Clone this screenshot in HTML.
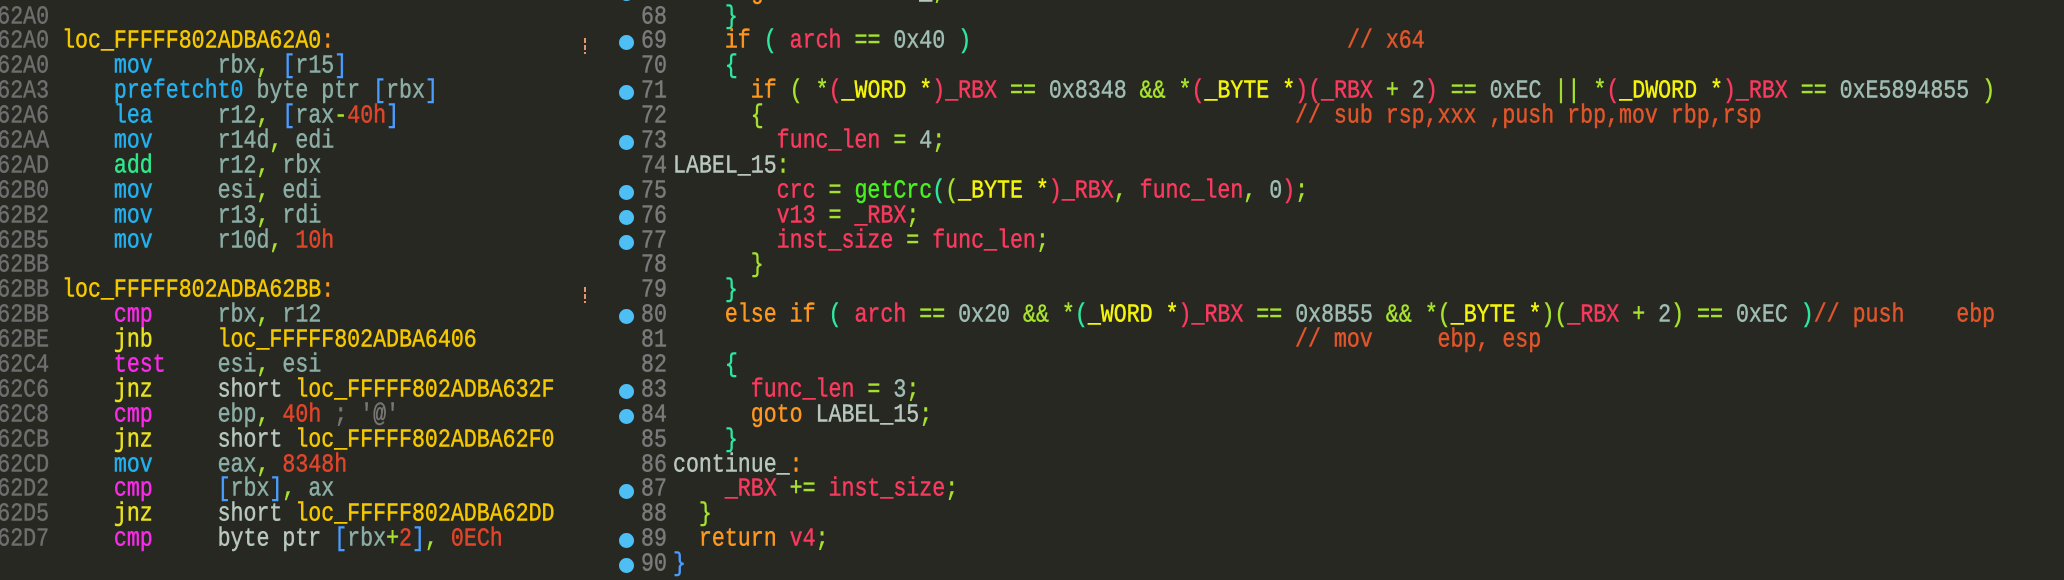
<!DOCTYPE html>
<html><head><meta charset="utf-8"><style>
html,body{margin:0;padding:0;background:#272822;width:2064px;height:576px;overflow:hidden}
.p{position:absolute;top:-19.35px;font-family:"Liberation Mono",monospace;font-size:21.6px;-webkit-text-stroke:0.4px currentColor}
.r{height:24.9px;line-height:24.9px;white-space:pre}
.r>span.t{display:inline-block;transform:scaleY(1.2);transform-origin:50% 55%}
.ad{color:#6e6e6e}
.lb{color:#f5c800}
.mv{color:#22b0f0}
.ad2{color:#2ee88a}
.cm{color:#f92ae8}
.jn{color:#e8e020}
.rg{color:#8aaea6}
.cmma{color:#a6e22e}
.br{color:#4a9cff}
.nm{color:#e0452a}
.gr{color:#777}
.kw{color:#fd971f}
.v{color:#f93a5e}
.n{color:#9fbdb4}
.op{color:#a6e22e}
.ty{color:#f4f40c}
.pa{color:#2ee8a0}
.co{color:#e0552a}
.fn{color:#48f020}
.lab{color:#b8c8bf}
.num{position:absolute;left:641px;top:-19.35px;font-family:"Liberation Mono",monospace;font-size:21.6px;color:#7a7a7a;-webkit-text-stroke:0.4px currentColor}
.dot{position:absolute;left:618.5px;width:15px;height:15px;border-radius:50%;background:#4dbff5}
.mk{position:absolute;left:584px;width:2px;height:16px;background:repeating-linear-gradient(#e8946a 0 5px,transparent 5px 7px)}
</style></head><body>
<div class="p" style="left:-2.75px">
<div class="r"><span class="t"><span class="ad">62A0</span></span></div>
<div class="r"><span class="t"><span class="ad">62A0</span></span></div>
<div class="r"><span class="t"><span class="ad">62A0</span> <span class="lb">loc_FFFFF802ADBA62A0</span><span class="kw">:</span></span></div>
<div class="r"><span class="t"><span class="ad">62A0</span>     <span class="mv">mov</span>     <span class="rg">rbx</span><span class="cmma">,</span> <span class="br">[</span><span class="rg">r15</span><span class="br">]</span></span></div>
<div class="r"><span class="t"><span class="ad">62A3</span>     <span class="mv">prefetcht0</span> <span class="rg">byte ptr</span> <span class="br">[</span><span class="rg">rbx</span><span class="br">]</span></span></div>
<div class="r"><span class="t"><span class="ad">62A6</span>     <span class="mv">lea</span>     <span class="rg">r12</span><span class="cmma">,</span> <span class="br">[</span><span class="rg">rax</span><span class="cmma">-</span><span class="nm">40h</span><span class="br">]</span></span></div>
<div class="r"><span class="t"><span class="ad">62AA</span>     <span class="mv">mov</span>     <span class="rg">r14d</span><span class="cmma">,</span> <span class="rg">edi</span></span></div>
<div class="r"><span class="t"><span class="ad">62AD</span>     <span class="ad2">add</span>     <span class="rg">r12</span><span class="cmma">,</span> <span class="rg">rbx</span></span></div>
<div class="r"><span class="t"><span class="ad">62B0</span>     <span class="mv">mov</span>     <span class="rg">esi</span><span class="cmma">,</span> <span class="rg">edi</span></span></div>
<div class="r"><span class="t"><span class="ad">62B2</span>     <span class="mv">mov</span>     <span class="rg">r13</span><span class="cmma">,</span> <span class="rg">rdi</span></span></div>
<div class="r"><span class="t"><span class="ad">62B5</span>     <span class="mv">mov</span>     <span class="rg">r10d</span><span class="cmma">,</span> <span class="nm">10h</span></span></div>
<div class="r"><span class="t"><span class="ad">62BB</span></span></div>
<div class="r"><span class="t"><span class="ad">62BB</span> <span class="lb">loc_FFFFF802ADBA62BB</span><span class="kw">:</span></span></div>
<div class="r"><span class="t"><span class="ad">62BB</span>     <span class="cm">cmp</span>     <span class="rg">rbx</span><span class="cmma">,</span> <span class="rg">r12</span></span></div>
<div class="r"><span class="t"><span class="ad">62BE</span>     <span class="jn">jnb</span>     <span class="lb">loc_FFFFF802ADBA6406</span></span></div>
<div class="r"><span class="t"><span class="ad">62C4</span>     <span class="cm">test</span>    <span class="rg">esi</span><span class="cmma">,</span> <span class="rg">esi</span></span></div>
<div class="r"><span class="t"><span class="ad">62C6</span>     <span class="jn">jnz</span>     <span class="lab">short</span> <span class="lb">loc_FFFFF802ADBA632F</span></span></div>
<div class="r"><span class="t"><span class="ad">62C8</span>     <span class="cm">cmp</span>     <span class="rg">ebp</span><span class="cmma">,</span> <span class="nm">40h</span> <span class="gr">; '@'</span></span></div>
<div class="r"><span class="t"><span class="ad">62CB</span>     <span class="jn">jnz</span>     <span class="lab">short</span> <span class="lb">loc_FFFFF802ADBA62F0</span></span></div>
<div class="r"><span class="t"><span class="ad">62CD</span>     <span class="mv">mov</span>     <span class="rg">eax</span><span class="cmma">,</span> <span class="nm">8348h</span></span></div>
<div class="r"><span class="t"><span class="ad">62D2</span>     <span class="cm">cmp</span>     <span class="br">[</span><span class="rg">rbx</span><span class="br">]</span><span class="cmma">,</span> <span class="rg">ax</span></span></div>
<div class="r"><span class="t"><span class="ad">62D5</span>     <span class="jn">jnz</span>     <span class="lab">short</span> <span class="lb">loc_FFFFF802ADBA62DD</span></span></div>
<div class="r"><span class="t"><span class="ad">62D7</span>     <span class="cm">cmp</span>     <span class="lab">byte ptr</span> <span class="br">[</span><span class="rg">rbx</span><span class="cmma">+</span><span class="nm">2</span><span class="br">]</span><span class="cmma">,</span> <span class="nm">0ECh</span></span></div>
<div class="r"></div>
</div>

<div class="mk" style="top:38px"></div>
<div class="mk" style="top:287px"></div>

<div class="dot" style="top:-14.5px"></div>
<div class="dot" style="top:35.3px"></div>
<div class="dot" style="top:85.1px"></div>
<div class="dot" style="top:134.9px"></div>
<div class="dot" style="top:184.7px"></div>
<div class="dot" style="top:209.6px"></div>
<div class="dot" style="top:234.5px"></div>
<div class="dot" style="top:309.2px"></div>
<div class="dot" style="top:383.9px"></div>
<div class="dot" style="top:408.8px"></div>
<div class="dot" style="top:483.5px"></div>
<div class="dot" style="top:533.3px"></div>
<div class="dot" style="top:558.2px"></div>

<div class="num">
<div class="r"><span class="t">67</span></div><div class="r"><span class="t">68</span></div><div class="r"><span class="t">69</span></div><div class="r"><span class="t">70</span></div><div class="r"><span class="t">71</span></div><div class="r"><span class="t">72</span></div><div class="r"><span class="t">73</span></div><div class="r"><span class="t">74</span></div><div class="r"><span class="t">75</span></div><div class="r"><span class="t">76</span></div><div class="r"><span class="t">77</span></div><div class="r"><span class="t">78</span></div><div class="r"><span class="t">79</span></div><div class="r"><span class="t">80</span></div><div class="r"><span class="t">81</span></div><div class="r"><span class="t">82</span></div><div class="r"><span class="t">83</span></div><div class="r"><span class="t">84</span></div><div class="r"><span class="t">85</span></div><div class="r"><span class="t">86</span></div><div class="r"><span class="t">87</span></div><div class="r"><span class="t">88</span></div><div class="r"><span class="t">89</span></div><div class="r"><span class="t">90</span></div>
</div>

<div class="p" style="left:673px">
<div class="r"><span class="t">      <span class="kw">goto</span> <span class="lab">continue_</span><span class="op">;</span></span></div>
<div class="r"><span class="t">    <span class="pa">}</span></span></div>
<div class="r"><span class="t">    <span class="kw">if</span> <span class="pa">(</span> <span class="v">arch</span> <span class="op">==</span> <span class="n">0x40</span> <span class="pa">)</span>                             <span class="co">// x64</span></span></div>
<div class="r"><span class="t">    <span class="pa">{</span></span></div>
<div class="r"><span class="t">      <span class="kw">if</span> <span class="op">(</span> <span class="op">*</span><span class="v">(</span><span class="ty">_WORD *</span><span class="v">)_RBX</span> <span class="op">==</span> <span class="n">0x8348</span> <span class="op">&amp;&amp;</span> <span class="op">*</span><span class="v">(</span><span class="ty">_BYTE *</span><span class="v">)(_RBX</span> <span class="op">+</span> <span class="n">2</span><span class="v">)</span> <span class="op">==</span> <span class="n">0xEC</span> <span class="op">||</span> <span class="op">*</span><span class="v">(</span><span class="ty">_DWORD *</span><span class="v">)_RBX</span> <span class="op">==</span> <span class="n">0xE5894855</span> <span class="op">)</span></span></div>
<div class="r"><span class="t">      <span class="op">{</span>                                         <span class="co">// sub rsp,xxx ,push rbp,mov rbp,rsp</span></span></div>
<div class="r"><span class="t">        <span class="v">func_len</span> <span class="op">=</span> <span class="n">4</span><span class="op">;</span></span></div>
<div class="r"><span class="t"><span class="lab">LABEL_15</span><span class="op">:</span></span></div>
<div class="r"><span class="t">        <span class="v">crc</span> <span class="op">=</span> <span class="fn">getCrc</span><span class="pa">(</span><span class="op">(</span><span class="ty">_BYTE *</span><span class="v">)_RBX</span><span class="op">,</span> <span class="v">func_len</span><span class="op">,</span> <span class="n">0</span><span class="v">)</span><span class="op">;</span></span></div>
<div class="r"><span class="t">        <span class="v">v13</span> <span class="op">=</span> <span class="v">_RBX</span><span class="op">;</span></span></div>
<div class="r"><span class="t">        <span class="v">inst_size</span> <span class="op">=</span> <span class="v">func_len</span><span class="op">;</span></span></div>
<div class="r"><span class="t">      <span class="op">}</span></span></div>
<div class="r"><span class="t">    <span class="pa">}</span></span></div>
<div class="r"><span class="t">    <span class="kw">else if</span> <span class="pa">(</span> <span class="v">arch</span> <span class="op">==</span> <span class="n">0x20</span> <span class="op">&amp;&amp;</span> <span class="op">*</span><span class="pa">(</span><span class="ty">_WORD *</span><span class="v">)_RBX</span> <span class="op">==</span> <span class="n">0x8B55</span> <span class="op">&amp;&amp;</span> <span class="op">*</span><span class="op">(</span><span class="ty">_BYTE *</span><span class="op">)(</span><span class="v">_RBX</span> <span class="op">+</span> <span class="n">2</span><span class="op">)</span> <span class="op">==</span> <span class="n">0xEC</span> <span class="pa">)</span><span class="co">// push    ebp</span></span></div>
<div class="r"><span class="t">                                                <span class="co">// mov     ebp, esp</span></span></div>
<div class="r"><span class="t">    <span class="pa">{</span></span></div>
<div class="r"><span class="t">      <span class="v">func_len</span> <span class="op">=</span> <span class="n">3</span><span class="op">;</span></span></div>
<div class="r"><span class="t">      <span class="kw">goto</span> <span class="lab">LABEL_15</span><span class="op">;</span></span></div>
<div class="r"><span class="t">    <span class="pa">}</span></span></div>
<div class="r"><span class="t"><span class="lab">continue_</span><span class="kw">:</span></span></div>
<div class="r"><span class="t">    <span class="v">_RBX</span> <span class="op">+=</span> <span class="v">inst_size</span><span class="op">;</span></span></div>
<div class="r"><span class="t">  <span class="op">}</span></span></div>
<div class="r"><span class="t">  <span class="kw">return</span> <span class="v">v4</span><span class="op">;</span></span></div>
<div class="r"><span class="t"><span class="br">}</span></span></div>
</div>
</body></html>
